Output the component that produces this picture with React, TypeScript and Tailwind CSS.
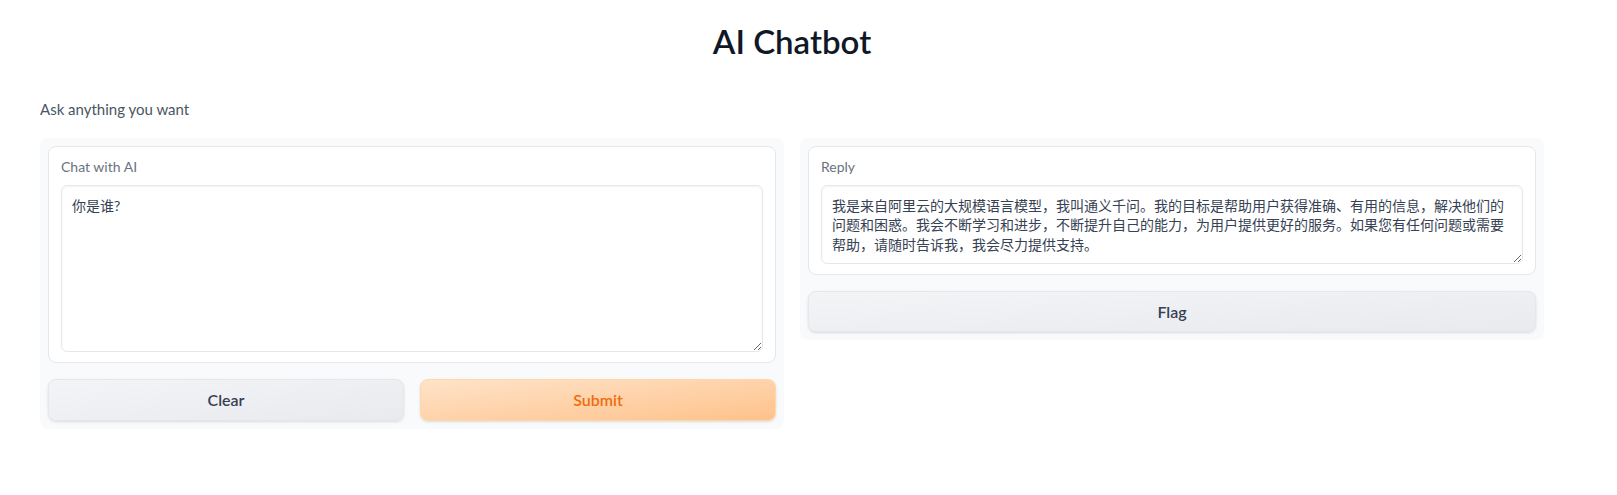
import React from 'react';

const reply =
  '我是来自阿里云的大规模语言模型，我叫通义千问。我的目标是帮助用户获得准确、有用的信息，解决他们的问题和困惑。我会不断学习和进步，不断提升自己的能力，为用户提供更好的服务。如果您有任何问题或需要帮助，请随时告诉我，我会尽力提供支持。';

const Block: React.FC<{ label: string; value: string; height: string }> = ({ label, value, height }) => (
  <div className="bg-white border border-gray-200 rounded-lg px-3 pt-2.5 pb-2.5">
    <div className="text-sm leading-5 text-gray-500 mb-2">{label}</div>
    <textarea
      readOnly
      value={value}
      className={`block w-full ${height} px-2.5 py-2.5 text-sm leading-snug text-gray-700 bg-white border border-gray-200 rounded-md shadow-[inset_0_1px_2px_rgba(0,0,0,0.05)] outline-none`}
    />
  </div>
);

const App: React.FC = () => {
  return (
    <div className="min-h-screen bg-white font-['Lato','Noto_Sans_CJK_SC',sans-serif]">
      <div className="ml-10 w-[1504px] pt-[21px]">
        <h1 className="text-center text-[33px] leading-[40px] font-semibold text-gray-900">AI Chatbot</h1>
        <p className="mt-[36px] text-[15px] leading-6 text-gray-600">Ask anything you want</p>

        <div className="mt-[17px] flex gap-4 items-start">
          <div className="flex-1 bg-gray-50 rounded-lg p-2 flex flex-col gap-4">
            <Block label="Chat with AI" value="你是谁?" height="h-[167px]" />
            <div className="flex gap-4">
              <button className="flex-1 h-[42px] rounded-lg border border-gray-200 bg-gradient-to-br from-gray-100 to-[#e9eaee] shadow-sm text-base font-semibold text-gray-700">
                Clear
              </button>
              <button className="flex-1 h-[42px] rounded-lg border border-orange-200 bg-gradient-to-br from-[#fee3c9] to-[#fec28a] shadow-sm text-base font-semibold text-[#ef6c0e]">
                Submit
              </button>
            </div>
          </div>

          <div className="flex-1 bg-gray-50 rounded-lg p-2 flex flex-col gap-4">
            <Block label="Reply" value={reply} height="h-[79px]" />
            <button className="w-full h-[41px] rounded-lg border border-gray-200 bg-gradient-to-br from-gray-100 to-[#e9eaee] shadow-sm text-base font-semibold text-gray-700">
              Flag
            </button>
          </div>
        </div>
      </div>
    </div>
  );
};

export default App;
